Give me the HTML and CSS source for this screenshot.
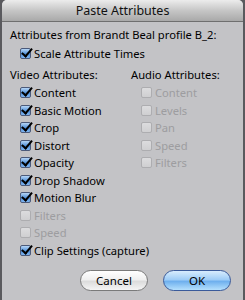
FILE: index.html
```html
<!DOCTYPE html>
<html>
<head>
<meta charset="utf-8">
<link rel="stylesheet" href="styles.css">
</head>
<body>
<div class="window">
  <div class="titlebar">Paste Attributes</div>
  <div class="content">
    <div class="heading top">Attributes from Brandt Beal profile B_2:</div>
    <div class="indent row"><span class="cb on"></span>Scale Attribute Times</div>
    <div class="columns">
      <div class="col video">
        <div class="heading sub">Video Attributes:</div>
        <div class="indent row"><span class="cb on"></span>Content</div>
        <div class="indent row"><span class="cb on"></span>Basic Motion</div>
        <div class="indent row"><span class="cb on"></span>Crop</div>
        <div class="indent row"><span class="cb on"></span>Distort</div>
        <div class="indent row"><span class="cb on"></span>Opacity</div>
        <div class="indent row"><span class="cb on"></span>Drop Shadow</div>
        <div class="indent row"><span class="cb on"></span>Motion Blur</div>
        <div class="indent row dis"><span class="cb"></span>Filters</div>
        <div class="indent row dis"><span class="cb"></span>Speed</div>
        <div class="indent row nowrap"><span class="cb on"></span>Clip Settings (capture)</div>
      </div>
      <div class="col audio">
        <div class="heading sub">Audio Attributes:</div>
        <div class="indent row dis"><span class="cb"></span>Content</div>
        <div class="indent row dis"><span class="cb"></span>Levels</div>
        <div class="indent row dis"><span class="cb"></span>Pan</div>
        <div class="indent row dis"><span class="cb"></span>Speed</div>
        <div class="indent row dis"><span class="cb"></span>Filters</div>
      </div>
    </div>
    <div class="buttons">
      <button class="btn">Cancel</button>
      <button class="btn default">OK</button>
    </div>
  </div>
</div>
</body>
</html>
```
FILE: styles.css
```css
html, body {
  margin: 0;
  padding: 0;
  background: #5a5a5e;
}
body {
  font-family: "Noto Sans", "DejaVu Sans", sans-serif;
  font-size: 11.2px;
  color: #000;
}
.window {
  width: 241px;
  height: 300px;
  margin: 0 2px;
  background: #c3c3c6;
  border-radius: 5px 5px 0 0;
  overflow: hidden;
  display: flex;
  flex-direction: column;
}
.titlebar {
  height: 21px;
  line-height: 21px;
  text-align: center;
  font-size: 12.5px;
  color: #111;
  background: linear-gradient(#ececec, #c6c6c6 50%, #a9a9a9);
  border-bottom: 1px solid #6f6f6f;
}
.content {
  padding: 3px 0 0 8px;
  flex: 1;
  display: flex;
  flex-direction: column;
}
.heading {
  height: 18px;
  line-height: 18px;
}
.heading.top {
  height: 19.5px;
  line-height: 19.5px;
}
.sub {
  margin-top: 4px;
}
.row {
  display: flex;
  align-items: center;
  height: 17.5px;
  white-space: nowrap;
}
.indent {
  padding-left: 10px;
}
.columns {
  display: flex;
}
.col.video {
  width: 121px;
}
.cb {
  width: 11px;
  height: 11px;
  border-radius: 2px;
  margin-right: 3px;
  box-sizing: border-box;
  border: 1px solid #a8a8aa;
  background: linear-gradient(#f6f6f6, #dcdcdc);
  position: relative;
  flex: none;
}
.cb.on {
  border-color: #4b5a7a;
  background: linear-gradient(#b7d6f6, #4e8fd9 55%, #7fb4ef);
}
.cb.on::after {
  content: "";
  position: absolute;
  left: 3px;
  top: -3px;
  width: 4px;
  height: 9px;
  border-right: 2px solid #000;
  border-bottom: 2px solid #000;
  transform: rotate(40deg);
}
.dis {
  color: #9d9da0;
}
.dis .cb {
  border-color: #adadb0;
  background: linear-gradient(#dcdcde, #cfcfd1);
}
.buttons {
  display: flex;
  justify-content: flex-end;
  gap: 15px;
  padding-right: 12px;
  margin-top: 11px;
}
.btn {
  width: 68px;
  height: 21px;
  border-radius: 11px;
  border: 1px solid #7a7a7a;
  background: linear-gradient(#ffffff, #f0f0f0 45%, #dcdcdc 55%, #f5f5f5);
  font-family: "Noto Sans", "DejaVu Sans", sans-serif;
  font-size: 11.5px;
  color: #000;
  padding: 0;
}
.btn.default {
  border-color: #3a5a9a;
  background: linear-gradient(#d8ecfd, #9fcdf7 45%, #6fb0ee 55%, #b5e0fd);
}
```
